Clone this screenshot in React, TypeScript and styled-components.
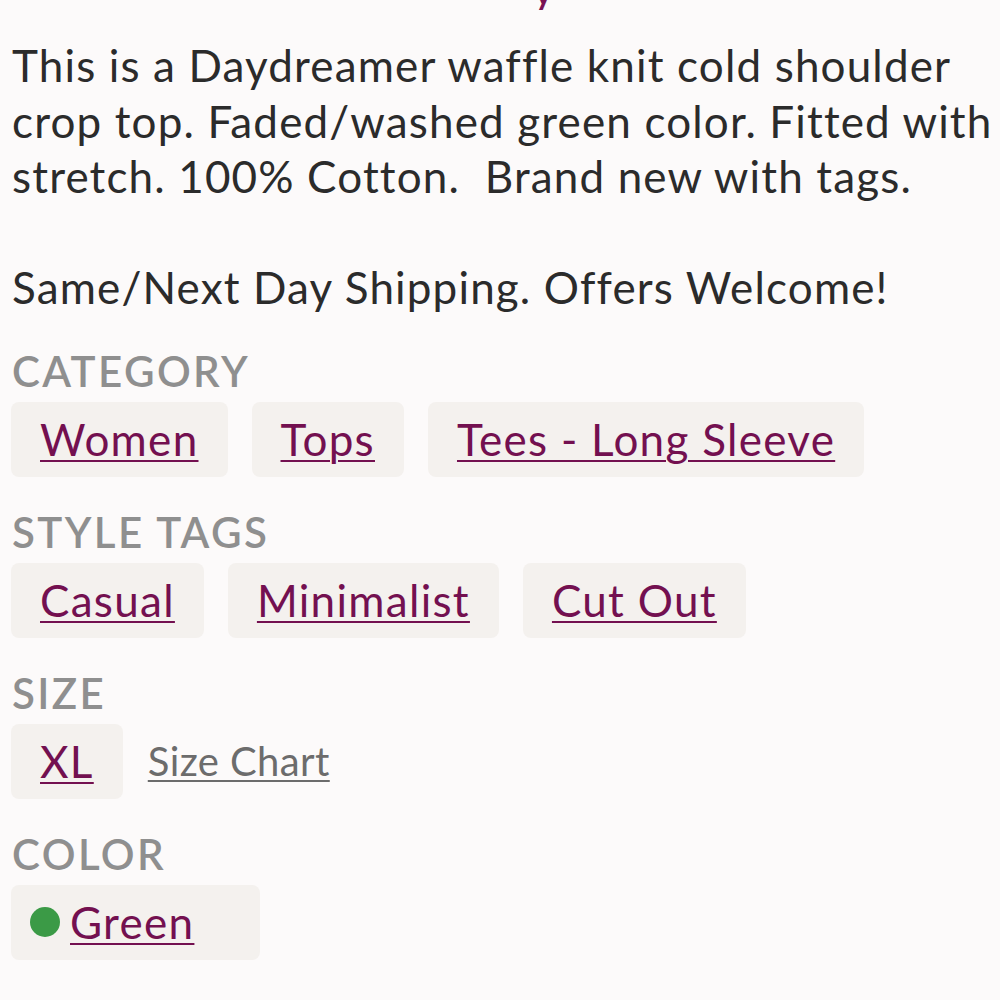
import React from "react";
import styled, { createGlobalStyle } from "styled-components";

const Global = createGlobalStyle`
  html, body { margin: 0; padding: 0; background: #fcfafa; }
  body { font-family: Lato, "Noto Sans", sans-serif; -webkit-font-smoothing: antialiased; }
`;

const Page = styled.div`
  padding: 0 0 0 12px;
  width: 1000px;
  box-sizing: border-box;
  overflow: hidden;
  height: 1000px;
`;

const TitleClip = styled.div`
  height: 10px;
  overflow: hidden;
`;

const Title = styled.div`
  font-size: 44px;
  line-height: 44px;
  color: #7a1254;
  margin-top: -34px;
  padding-left: 520px;
`;

const Description = styled.p`
  margin: 28px 0 10px;
  font-size: 44px;
  line-height: 55.5px;
  color: #2b2b2b;
  white-space: pre;
  letter-spacing: 1.15px;
`;

const Section = styled.section`
  margin-top: 30px;
`;

const Label = styled.h3`
  margin: 0;
  font-size: 42px;
  line-height: 50px;
  font-weight: 600;
  letter-spacing: 2.4px;
  color: #8f8f8f;
  text-transform: uppercase;
`;

const ChipRow = styled.div`
  display: flex;
  align-items: center;
  gap: 25px;
  margin-top: 6px;
`;

const Chip = styled.div<{ $padRight?: number; $padLeft?: number }>`
  display: inline-flex;
  align-items: center;
  gap: 10px;
  height: 75px;
  box-sizing: border-box;
  padding: 0 ${(p) => p.$padRight ?? 29}px 0 ${(p) => p.$padLeft ?? 29}px;
  margin-left: -1px;
  background: #f4f1ee;
  border-radius: 8px;
`;

const TagLink = styled.a`
  font-size: 44px;
  letter-spacing: 1.3px;
  color: #731050;
  text-decoration: underline;
  text-decoration-thickness: 2px;
  text-underline-offset: 4px;
`;

const PlainLink = styled.a`
  font-size: 40px;
  letter-spacing: 0.4px;
  color: #6c6c6c;
  text-decoration: underline;
  text-decoration-thickness: 2px;
  text-underline-offset: 4px;
`;

const Dot = styled.span<{ $color: string }>`
  width: 30px;
  height: 30px;
  border-radius: 50%;
  background: ${(p) => p.$color};
  flex: none;
`;

const description =
  "This is a Daydreamer waffle knit cold shoulder\ncrop top. Faded/washed green color. Fitted with\nstretch. 100% Cotton.  Brand new with tags.\n\nSame/Next Day Shipping. Offers Welcome!";

export default function App() {
  return (
    <>
      <Global />
      <Page>
        <TitleClip>
          <Title>y</Title>
        </TitleClip>
        <Description>{description}</Description>
        <Section>
          <Label>Category</Label>
          <ChipRow>
            {["Women", "Tops", "Tees - Long Sleeve"].map((t) => (
              <Chip key={t}>
                <TagLink href="#">{t}</TagLink>
              </Chip>
            ))}
          </ChipRow>
        </Section>
        <Section>
          <Label>Style Tags</Label>
          <ChipRow>
            {["Casual", "Minimalist", "Cut Out"].map((t) => (
              <Chip key={t}>
                <TagLink href="#">{t}</TagLink>
              </Chip>
            ))}
          </ChipRow>
        </Section>
        <Section>
          <Label>Size</Label>
          <ChipRow>
            <Chip>
              <TagLink href="#">XL</TagLink>
            </Chip>
            <PlainLink href="#">Size Chart</PlainLink>
          </ChipRow>
        </Section>
        <Section>
          <Label>Color</Label>
          <ChipRow>
            <Chip $padLeft={19} $padRight={66}>
              <Dot $color="#3b9a46" />
              <TagLink href="#">Green</TagLink>
            </Chip>
          </ChipRow>
        </Section>
      </Page>
    </>
  );
}
